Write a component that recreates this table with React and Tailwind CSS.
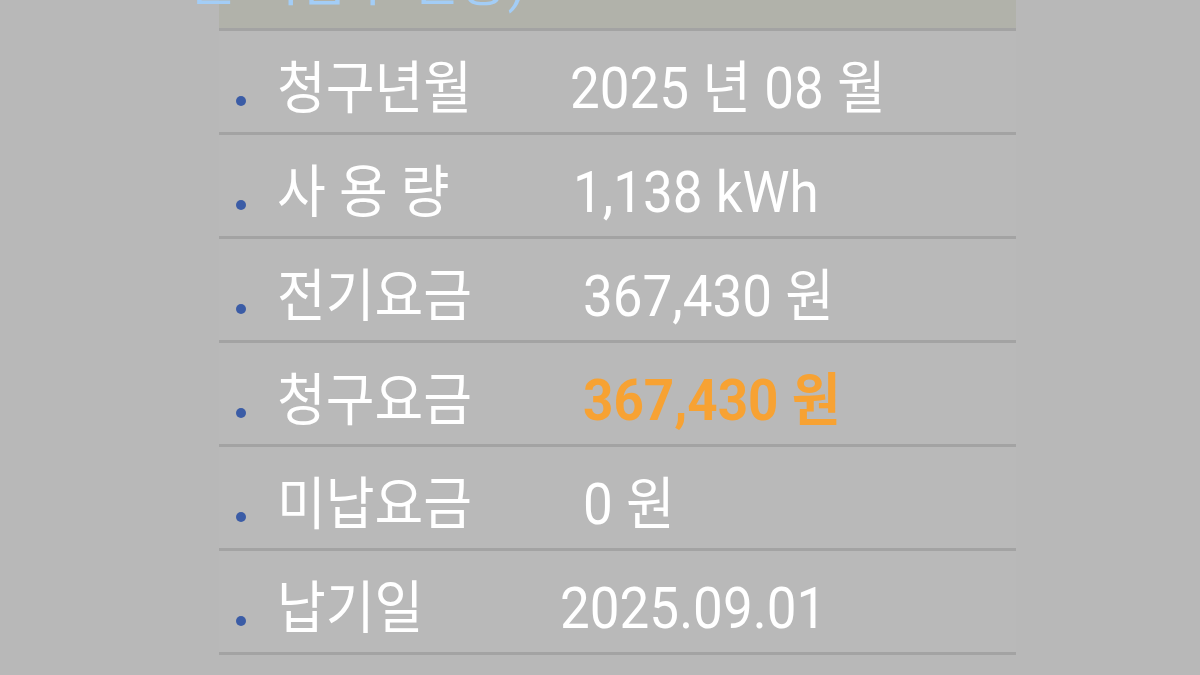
const FONT = "font-['Roboto','Noto_Sans_CJK_KR',sans-serif]";

const ROWS = [
  { label: "청구년월", value: "2025 년 08 월", offset: "ml-0" },
  { label: "사 용 량", value: "1,138 kWh", offset: "ml-[3px]" },
  { label: "전기요금", value: "367,430 원", offset: "ml-[13px]" },
  { label: "청구요금", value: "367,430 원", offset: "ml-[13px]", highlight: true },
  { label: "미납요금", value: "0 원", offset: "ml-[13px]" },
  { label: "납기일", value: "2025.09.01", offset: "-ml-[10px]" },
];

function BillRow({ label, value, offset, highlight }) {
  return (
    <div className="flex h-[104px] items-center border-b-[3px] border-[#a3a3a3] bg-[#b9b9b9] pt-[16px]">
      <span className="relative top-[11px] ml-[17px] block h-[10px] w-[10px] shrink-0 rounded-full bg-[#3b5ca6]" />
      <span className="ml-[31px] w-[293px] shrink-0 scale-y-[1.08] text-[53px] leading-none text-white">{label}</span>
      <span
        className={`${offset} whitespace-nowrap scale-y-[1.08] text-[53px] leading-none ${
          highlight ? "font-bold text-[#f7a233]" : "text-white"
        }`}
      >
        {value}
      </span>
    </div>
  );
}

export default function App() {
  return (
    <div className={`h-[675px] w-full overflow-hidden bg-[#b8b8b8] ${FONT}`}>
      <div className="relative ml-[219px] w-[797px]">
        <div className="h-[31px] border-b-[3px] border-[#a3a3a3] bg-[#b1b2aa]" />
        <div className="absolute -left-[30px] -top-[43px] text-[53px] leading-none text-[#a3cdf6]">
          은 기납부 현황)
        </div>
        {ROWS.map((row) => (
          <BillRow key={row.label} {...row} />
        ))}
      </div>
    </div>
  );
}
